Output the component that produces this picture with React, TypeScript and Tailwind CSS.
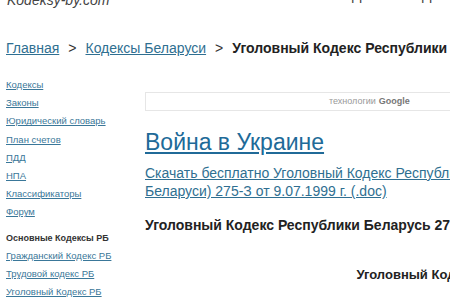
import React from 'react';

const sideLinks = [
  'Кодексы',
  'Законы',
  'Юридический словарь',
  'План счетов',
  'ПДД',
  'НПА',
  'Классификаторы',
  'Форум',
];

const mainCodes = ['Гражданский Кодекс РБ', 'Трудовой кодекс РБ', 'Уголовный Кодекс РБ'];

const App: React.FC = () => {
  return (
    <div className="w-[450px] h-[300px] overflow-hidden bg-white font-['Liberation_Sans',Arial,sans-serif] text-[#222]">
      <div className="w-[900px]">
        {/* Header */}
        <div className="relative h-[14px]">
          <div className="absolute left-[7px] top-[-8px] text-[14px] leading-[16px] italic text-[#444]">
            Kodeksy-by.com
          </div>
          <div className="absolute left-[352px] top-[-13px] text-[14px] leading-[16px] text-[#444]">Д</div>
          <div className="absolute left-[422px] top-[-13px] text-[14px] leading-[16px] text-[#444]">Д</div>
        </div>

        {/* Breadcrumb */}
        <div className="flex items-center mt-[25px] pl-[6px] text-[14px] leading-[18px] whitespace-nowrap">
          <a href="#" className="text-[#2f6f91] underline">Главная</a>
          <span className="mx-[9px] text-[#333]">&gt;</span>
          <a href="#" className="text-[#2f6f91] underline">Кодексы Беларуси</a>
          <span className="mx-[9px] text-[#333]">&gt;</span>
          <span className="font-bold text-[#222]">Уголовный Кодекс Республики Беларусь</span>
        </div>

        <div className="flex mt-[19px]">
          {/* Sidebar */}
          <div className="w-[145px] shrink-0 pl-[6px] text-[9.5px] leading-[18.2px]">
            <ul>
              {sideLinks.map((l) => (
                <li key={l}>
                  <a href="#" className="text-[#3a7799] underline">{l}</a>
                </li>
              ))}
            </ul>
            <div className="mt-[7px] text-[9px] font-bold text-[#333]">Основные Кодексы РБ</div>
            <ul>
              {mainCodes.map((l) => (
                <li key={l}>
                  <a href="#" className="text-[#3a7799] underline">{l}</a>
                </li>
              ))}
            </ul>
          </div>

          {/* Main */}
          <div className="w-[688px] shrink-0 pt-[16px]">
            <div className="flex items-center h-[19px] border border-[#e6e6e6] pl-[183px]">
              <span className="text-[9px] text-[#999]">технологии</span>
              <span className="ml-[3px] text-[9px] font-bold text-[#777]">Google</span>
            </div>

            <a href="#" className="block mt-[18px] text-[23px] leading-[26px] text-[#206a98] underline">
              Война в Украине
            </a>

            <a href="#" className="block mt-[9px] w-[420px] text-[14px] leading-[18px] text-[#2f6f91] underline">
              Скачать бесплатно Уголовный Кодекс Республики Беларусь (УК Беларуси) 275-З от 9.07.1999 г. (.doc)
            </a>

            <div className="mt-[16px] text-[14px] leading-[18px] font-bold text-[#222] whitespace-nowrap">
              Уголовный Кодекс Республики Беларусь 275-З от 9.07.1999 г.
            </div>

            <div className="mt-[33px] text-center text-[13px] leading-[16px] font-bold text-[#222]">
              Уголовный Кодекс Республики Беларусь
            </div>
          </div>
        </div>
      </div>
    </div>
  );
};

export default App;
